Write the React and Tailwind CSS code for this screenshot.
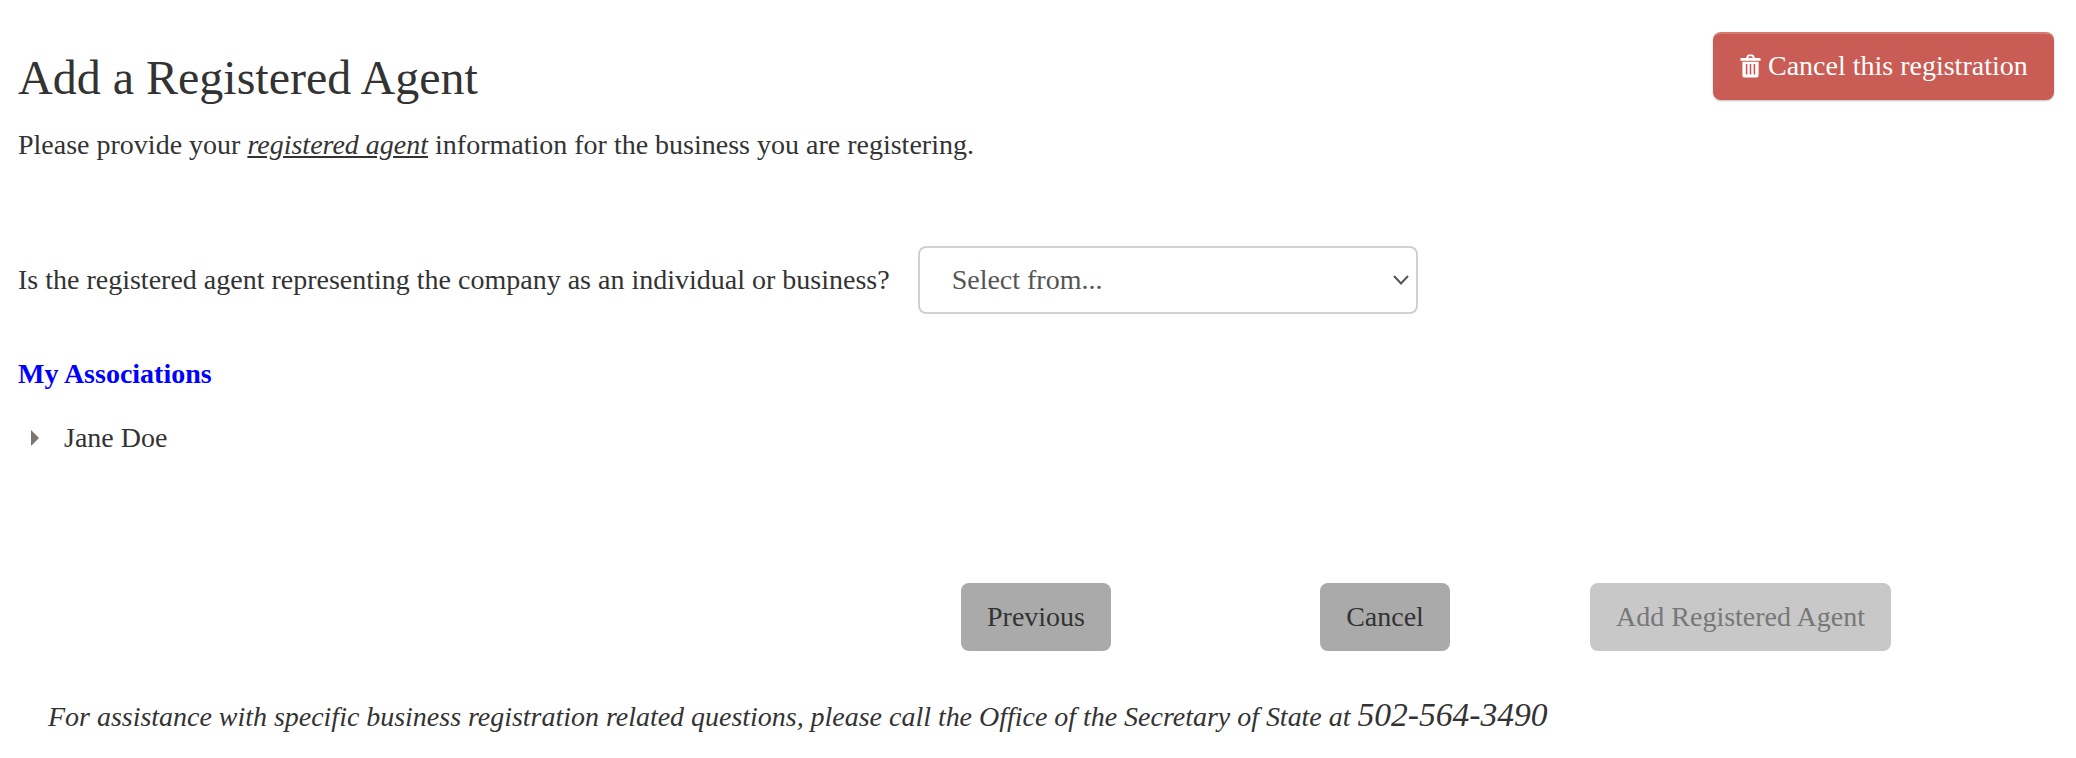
const serif = "font-['Liberation_Serif','Times_New_Roman',serif]";

function TrashIcon() {
  return (
    <svg viewBox="0 0 21 24" className="w-[21px] h-[24px] fill-white" aria-hidden="true">
      <path
        fillRule="evenodd"
        d="M6 4 L7.2 1.4 Q7.7 0.4 8.8 0.4 H12.2 Q13.3 0.4 13.8 1.4 L15 4 H19.6 Q20.6 4 20.6 5 V6.8 H0.4 V5 Q0.4 4 1.4 4 Z M8.2 4 H12.8 L12 2.2 H9 Z M2.4 7.8 H18.6 V21 Q18.6 23.6 16.2 23.6 H4.8 Q2.4 23.6 2.4 21 Z M5.8 10 V20.6 H7.4 V10 Z M9.7 10 V20.6 H11.3 V10 Z M13.6 10 V20.6 H15.2 V10 Z"
      />
    </svg>
  );
}

export default function App() {
  return (
    <div className={`${serif} h-[758px] bg-white text-[#333] text-[28px] pl-[18px] pr-[22px]`}>
      <div className="flex justify-between items-start pt-[32px]">
        <h1 className="text-[48px] leading-[50px] mt-[21px]">Add a Registered Agent</h1>
        <button className="flex items-center gap-[7px] w-[341px] h-[68px] pl-[27px] pb-[2px] rounded-[8px] bg-[#c95c54] border-t-[2px] border-[#d47a73] text-white shadow-[0_1px_2px_rgba(0,0,0,0.25)]">
          <TrashIcon />
          Cancel this registration
        </button>
      </div>

      <p className="mt-[25px] leading-[34px]">
        Please provide your{" "}
        <span className="italic underline">registered agent</span> information for the business you are registering.
      </p>

      <div className="flex items-center mt-[84px]">
        <label>Is the registered agent representing the company as an individual or business?</label>
        <div className="relative ml-[28px]">
          <div className="w-[500px] h-[68px] flex items-center pl-[32px] rounded-[8px] border-[2px] border-[#d0d0d0] text-[#555] bg-white">
            Select from...
          </div>
          <svg viewBox="0 0 16 10" className="absolute right-[9px] top-[29px] w-[16px] h-[10px] fill-none stroke-[#555] stroke-2" aria-hidden="true">
            <path d="M1 1 L8 8.5 L15 1" />
          </svg>
        </div>
      </div>

      <div className="mt-[43px] font-bold text-[#0000ff] leading-[34px]">My Associations</div>

      <div className="flex items-center mt-[30px] leading-[34px]">
        <svg viewBox="0 0 8 16" className="w-[8px] h-[16px] ml-[13px] fill-[#7a7570]" aria-hidden="true">
          <path d="M0 0 L8 8 L0 16 Z" />
        </svg>
        <span className="ml-[25px]">Jane Doe</span>
      </div>

      <div className="flex mt-[128px] h-[68px] pl-[943px]">
        <button className="w-[150px] rounded-[8px] bg-[#aaaaaa]">Previous</button>
        <button className="w-[130px] ml-[209px] rounded-[8px] bg-[#aaaaaa]">Cancel</button>
        <button className="w-[301px] ml-[140px] rounded-[8px] bg-[#c8c8c8] text-[#777]">Add Registered Agent</button>
      </div>

      <p className="italic mt-[44px] pl-[30px] leading-[40px] tracking-[-0.02px]">
        For assistance with specific business registration related questions, please call the Office of the Secretary of State at{" "}
        <span className="text-[33.6px]">502-564-3490</span>
      </p>
    </div>
  );
}
